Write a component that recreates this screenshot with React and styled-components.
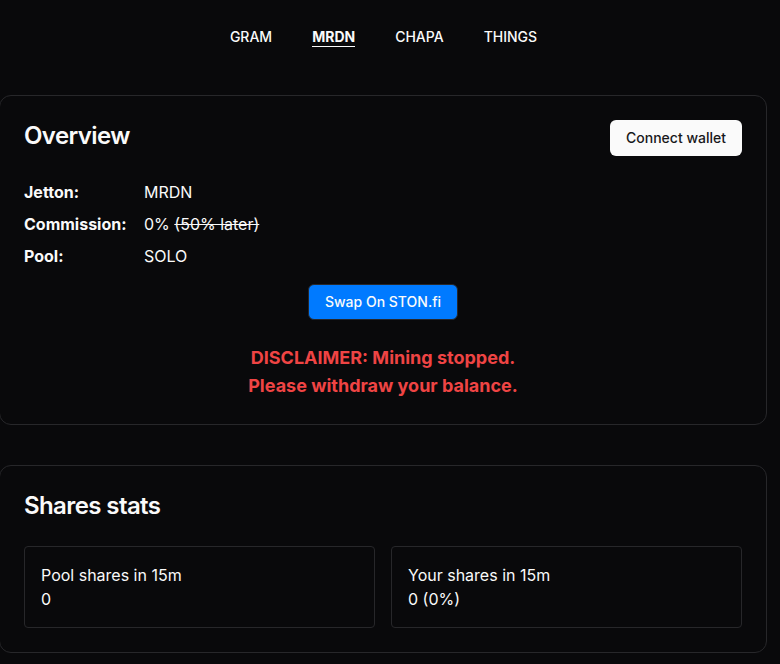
import React from "react";
import styled, { createGlobalStyle } from "styled-components";

const Global = createGlobalStyle`
  html, body { margin: 0; padding: 0; background: #09090b; }
  body { font-family: Inter, "Liberation Sans", sans-serif; color: #fafafa; overflow: hidden; }
`;

const Page = styled.div`
  width: 780px;
  height: 664px;
  box-sizing: border-box;
  padding-right: 13px;
  background: #09090b;
  overflow: hidden;
`;

const Nav = styled.nav`
  height: 95px;
  box-sizing: border-box;
  padding-top: 27px;
  display: flex;
  justify-content: center;
  align-items: flex-start;
  gap: 40px;
`;

const NavItem = styled.a`
  font-size: 14px;
  line-height: 20px;
  font-weight: ${(p) => (p.$active ? 700 : 500)};
  color: #fafafa;
  height: 19px;
  border-bottom: ${(p) => (p.$active ? "1px solid #fafafa" : "none")};
`;

const Card = styled.section`
  box-sizing: border-box;
  border: 1px solid #27272a;
  border-radius: 12px;
  padding: 24px;
  margin: 0 0 40px -1px;
`;

const HeaderRow = styled.div`
  display: flex;
  justify-content: space-between;
  align-items: flex-start;
`;

const Title = styled.h2`
  margin: 0;
  font-size: 24px;
  line-height: 32px;
  font-weight: 600;
  letter-spacing: -0.6px;
`;

const WalletButton = styled.button`
  width: 132px;
  height: 36px;
  border: none;
  border-radius: 6px;
  background: #fafafa;
  color: #18181b;
  font: 500 14px/20px Inter, "Liberation Sans", sans-serif;
`;

const InfoList = styled.div`
  margin-top: 20px;
  display: flex;
  flex-direction: column;
`;

const InfoRow = styled.div`
  display: flex;
  height: 32px;
  align-items: center;
  font-size: 16px;
`;

const InfoLabel = styled.span`
  width: 120px;
  font-weight: 700;
`;

const Center = styled.div`
  display: flex;
  flex-direction: column;
  align-items: center;
`;

const SwapButton = styled.button`
  margin-top: 12px;
  width: 150px;
  height: 36px;
  box-sizing: border-box;
  border: 1px solid #27272a;
  border-radius: 6px;
  background: #007aff;
  color: #fafafa;
  font: 500 14px/20px Inter, "Liberation Sans", sans-serif;
`;

const Disclaimer = styled.p`
  margin: 24px 0 0;
  text-align: center;
  color: #ef4444;
  font-size: 18px;
  line-height: 28px;
  font-weight: 700;
`;

const StatsGrid = styled.div`
  margin-top: 24px;
  display: grid;
  grid-template-columns: 1fr 1fr;
  gap: 16px;
`;

const StatBox = styled.div`
  box-sizing: border-box;
  height: 82px;
  border: 1px solid #27272a;
  border-radius: 4px;
  padding: 16px;
  font-size: 16px;
  line-height: 24px;
`;

export default function App() {
  return (
    <Page>
      <Global />
      <Nav>
        <NavItem>GRAM</NavItem>
        <NavItem $active>MRDN</NavItem>
        <NavItem>CHAPA</NavItem>
        <NavItem>THINGS</NavItem>
      </Nav>
      <Card>
        <HeaderRow>
          <Title>Overview</Title>
          <WalletButton>Connect wallet</WalletButton>
        </HeaderRow>
        <InfoList>
          <InfoRow><InfoLabel>Jetton:</InfoLabel><span>MRDN</span></InfoRow>
          <InfoRow><InfoLabel>Commission:</InfoLabel><span>0% <s>(50% later)</s></span></InfoRow>
          <InfoRow><InfoLabel>Pool:</InfoLabel><span>SOLO</span></InfoRow>
        </InfoList>
        <Center>
          <SwapButton>Swap On STON.fi</SwapButton>
          <Disclaimer>DISCLAIMER: Mining stopped.<br />Please withdraw your balance.</Disclaimer>
        </Center>
      </Card>
      <Card>
        <Title>Shares stats</Title>
        <StatsGrid>
          <StatBox>Pool shares in 15m<br />0</StatBox>
          <StatBox>Your shares in 15m<br />0 (0%)</StatBox>
        </StatsGrid>
      </Card>
    </Page>
  );
}
